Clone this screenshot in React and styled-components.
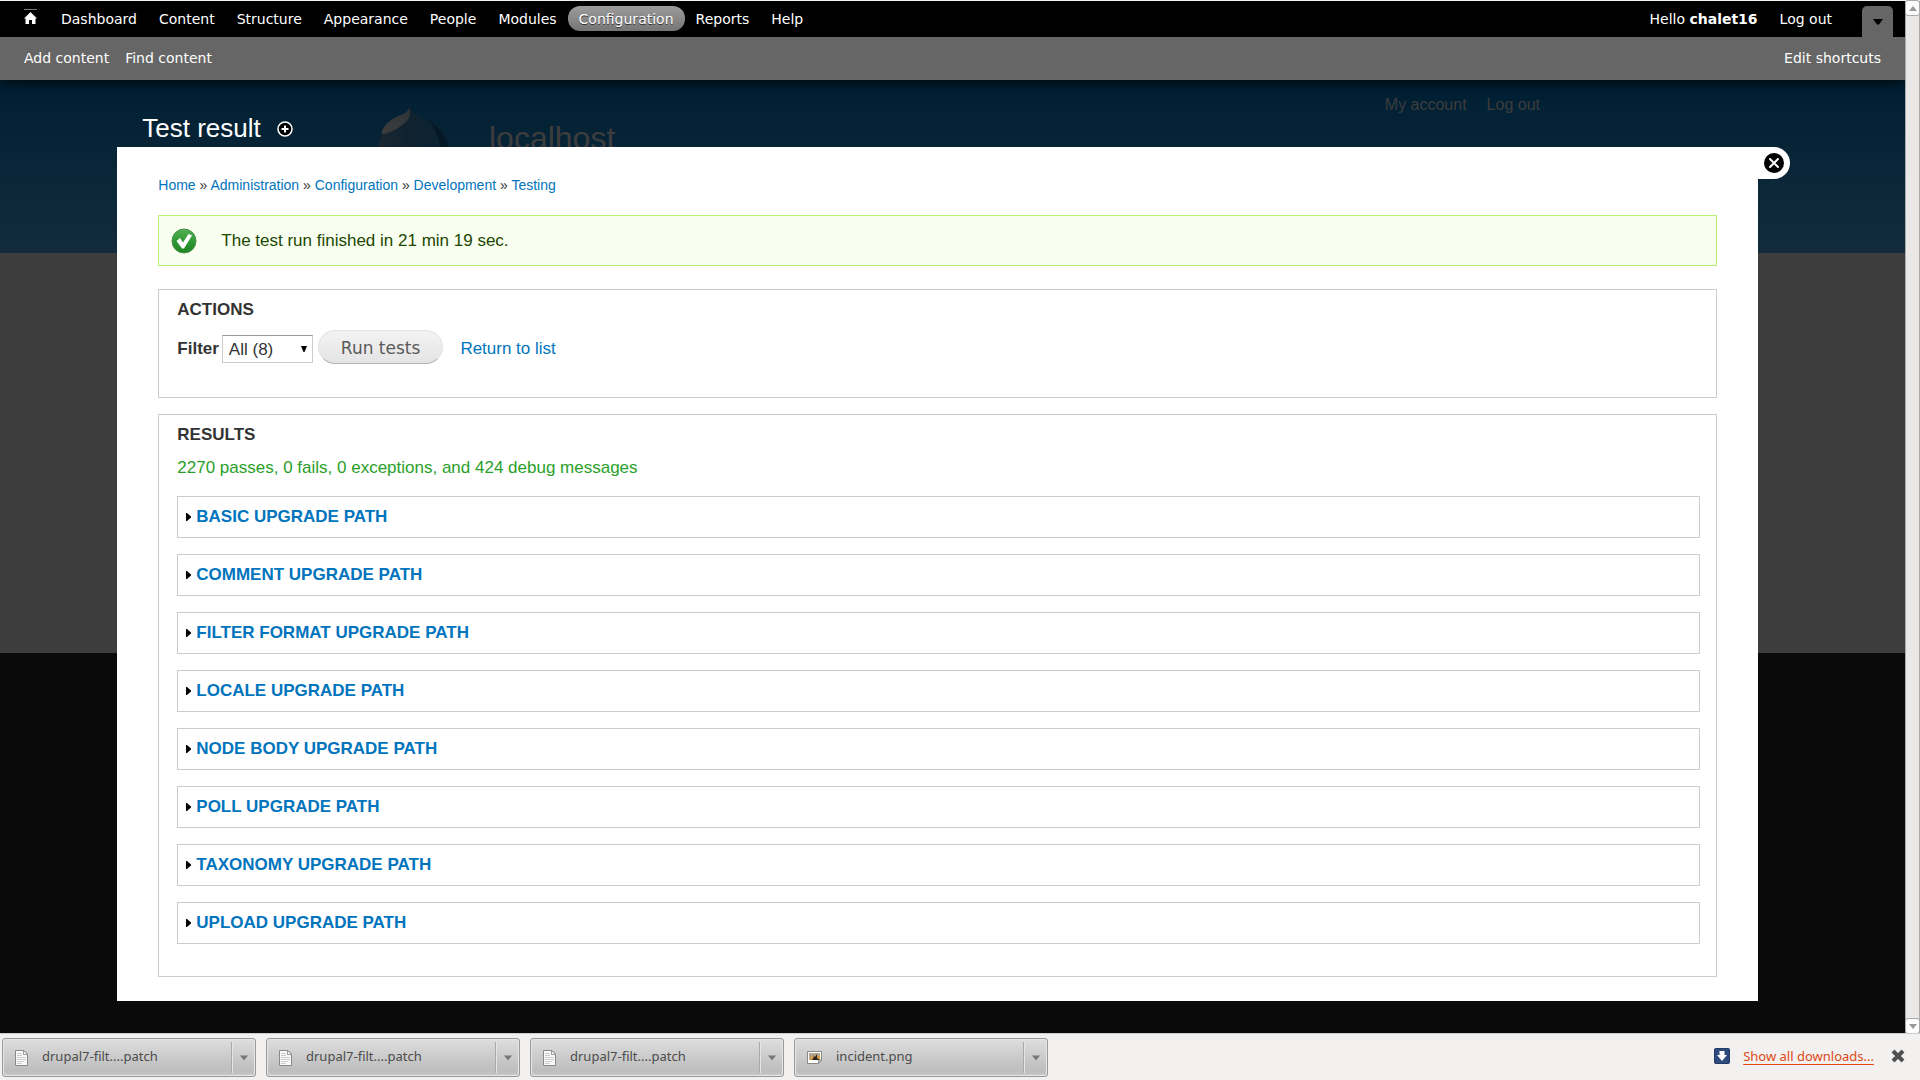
import React, { useState } from "react";
import styled, { createGlobalStyle } from "styled-components";

const mainMenu = [
  "Dashboard",
  "Content",
  "Structure",
  "Appearance",
  "People",
  "Modules",
  "Configuration",
  "Reports",
  "Help",
];

const crumbs = [
  "Home",
  "Administration",
  "Configuration",
  "Development",
  "Testing",
];

const testGroups = [
  "Basic upgrade path",
  "Comment upgrade path",
  "Filter format upgrade path",
  "Locale upgrade path",
  "Node body upgrade path",
  "Poll upgrade path",
  "Taxonomy upgrade path",
  "Upload upgrade path",
];

const downloads = [
  { name: "drupal7-filt....patch", type: "text" },
  { name: "drupal7-filt....patch", type: "text" },
  { name: "drupal7-filt....patch", type: "text" },
  { name: "incident.png", type: "image" },
];

function Toolbar() {
  return (
    <ToolbarWrap>
      <ToolbarMenu>
        <MenuList>
          <HomeLink href="#home" aria-label="Home">
            <svg width="14" height="16" viewBox="0 0 14 16">
              <path d="M0 .5h13" stroke="#777" />
              <path
                d="M6.5 3 0 9.500h1.500V15h3.500v-4h3v4h3.500V9.500H13z"
                fill="#fff"
              />
            </svg>
          </HomeLink>
          {mainMenu.map((item) => (
            <MenuLink
              key={item}
              href={`#${item}`}
              $active={item === "Configuration"}
            >
              {item}
            </MenuLink>
          ))}
        </MenuList>
        <UserMenu>
          <MenuLink href="#user">
            Hello <strong>chalet16</strong>
          </MenuLink>
          <MenuLink href="#logout">Log out</MenuLink>
          <DrawerToggle type="button" aria-label="Hide shortcuts">
            <svg width="10" height="6" viewBox="0 0 10 6">
              <path d="M0 0h10L6 5.500H4z" fill="#000" />
            </svg>
          </DrawerToggle>
        </UserMenu>
      </ToolbarMenu>
      <Shortcuts>
        <ShortcutList>
          <ShortcutLink href="#add">Add content</ShortcutLink>
          <ShortcutLink href="#find">Find content</ShortcutLink>
        </ShortcutList>
        <ShortcutLink href="#shortcuts">Edit shortcuts</ShortcutLink>
      </Shortcuts>
    </ToolbarWrap>
  );
}

function SiteHeader() {
  return (
    <Header>
      <HeaderInner>
        <SiteLogo width="74" height="84" viewBox="0 0 74 84">
          <defs>
            <linearGradient id="drop" x1="0" y1="0" x2="1" y2="0">
              <stop offset="0" stopColor="#1a2731" />
              <stop offset="0.4" stopColor="#11222f" />
              <stop offset="1" stopColor="#0a2436" />
            </linearGradient>
            <linearGradient id="shine" x1="1" y1="0" x2="0" y2="1">
              <stop offset="0" stopColor="#2f3337" />
              <stop offset="1" stopColor="#3d3d3d" />
            </linearGradient>
          </defs>
          <path
            d="M33 0c1 10 10 12 20 18 12 7 19 18 19 32 0 19-16 33-36 33S1 69 1 50C1 36 6 25 15 17c8-6 17-7 18-17z"
            fill="url(#drop)"
          />
          <path
            d="M53 18c12 7 19 18 19 32 0 12-5 20-13 26 7-14 8-40-6-58z"
            fill="#041826"
          />
          <path
            d="M32 4c3 8-1 13-7 17-6 5-12 7-17 9-4 1-4-2-2-5 3-6 8-9 13-12 6-3 11-3 13-9z"
            fill="url(#shine)"
          />
        </SiteLogo>
        <SiteName>localhost</SiteName>
        <SecondaryMenu>
          <span>My account</span>
          <span>Log out</span>
        </SecondaryMenu>
      </HeaderInner>
    </Header>
  );
}

function StatusMessage() {
  return (
    <Message role="status">
      <svg width="26" height="26" viewBox="0 0 26 26">
        <defs>
          <linearGradient id="ok" x1="0" y1="0" x2="0" y2="1">
            <stop offset="0" stopColor="#55b055" />
            <stop offset="0.5" stopColor="#2f9a33" />
            <stop offset="1" stopColor="#1c8420" />
          </linearGradient>
        </defs>
        <circle cx="13" cy="13" r="12" fill="url(#ok)" stroke="#4c8f4c" />
        <path
          d="M5.500 13 9 10l3 4.500L17.500 6l3.500 1.500L13 20.500h-2z"
          fill="#fff"
        />
      </svg>
      The test run finished in 21 min 19 sec.
    </Message>
  );
}

function Actions() {
  const [filter, setFilter] = useState("all");
  return (
    <Fieldset>
      <Legend>Actions</Legend>
      <ActionRow>
        <label htmlFor="filter">Filter</label>
        <SelectWrap>
          <Select
            id="filter"
            value={filter}
            onChange={(e) => setFilter(e.target.value)}
          >
            <option value="all">All (8)</option>
            <option value="pass">Pass (8)</option>
            <option value="fail">Fail (0)</option>
          </Select>
          <SelectArrow width="6" height="6" viewBox="0 0 6 6">
            <path d="M0 0h6L3.500 6h-1z" fill="#000" />
          </SelectArrow>
        </SelectWrap>
        <RunButton type="button">Run tests</RunButton>
        <ReturnLink href="#list">Return to list</ReturnLink>
      </ActionRow>
    </Fieldset>
  );
}

function Results() {
  return (
    <Fieldset>
      <Legend>Results</Legend>
      <Summary>
        2270 passes, 0 fails, 0 exceptions, and 424 debug messages
      </Summary>
      <GroupList>
        {testGroups.map((group) => (
          <Group key={group}>
            <svg width="6" height="10" viewBox="0 0 6 10">
              <path d="M0 1h1l4 3.500v1L1 9H0z" fill="#000" />
            </svg>
            <GroupLink href={`#${group}`}>{group}</GroupLink>
          </Group>
        ))}
      </GroupList>
    </Fieldset>
  );
}

function Overlay() {
  return (
    <OverlayWrap>
      <TitleBar>
        <Title>Test result</Title>
        <AddShortcut type="button" aria-label="Add to shortcuts">
          <svg width="16" height="16" viewBox="0 0 16 16">
            <circle
              cx="8"
              cy="8"
              r="7"
              fill="#000"
              stroke="#fff"
              strokeWidth="1.500"
            />
            <path d="M8 4.500v7M4.500 8h7" stroke="#fff" strokeWidth="2" />
          </svg>
        </AddShortcut>
      </TitleBar>
      <OverlayContent>
        <CloseButton type="button" aria-label="Close overlay">
          <svg width="20" height="20" viewBox="0 0 20 20">
            <circle cx="10" cy="10" r="10" fill="#000" />
            <path
              d="M6 6l8 8M14 6l-8 8"
              stroke="#fff"
              strokeWidth="2"
              strokeLinecap="round"
            />
          </svg>
        </CloseButton>
        <Breadcrumb aria-label="Breadcrumb">
          {crumbs.map((crumb, i) => (
            <React.Fragment key={crumb}>
              {i > 0 && " » "}
              <a href={`#${crumb}`}>{crumb}</a>
            </React.Fragment>
          ))}
        </Breadcrumb>
        <StatusMessage />
        <Fieldsets>
          <Actions />
          <Results />
        </Fieldsets>
      </OverlayContent>
    </OverlayWrap>
  );
}

function ScrollBar() {
  return (
    <ScrollTrack>
      <ScrollButton type="button" aria-label="Scroll up">
        <svg width="8" height="5" viewBox="0 0 8 5">
          <path d="M0 5h8L4 0z" fill="#999" />
        </svg>
      </ScrollButton>
      <ScrollButton type="button" aria-label="Scroll down">
        <svg width="8" height="5" viewBox="0 0 8 5">
          <path d="M0 0h8L4 5z" fill="#999" />
        </svg>
      </ScrollButton>
    </ScrollTrack>
  );
}

function FileIcon({ type }) {
  if (type === "image") {
    return (
      <svg width="16" height="16" viewBox="0 0 16 16">
        <path d="M.5 1.500h14v9l-3 3H.5z" fill="#fff" stroke="#8a8a84" />
        <path d="M2 3h11v7H2z" fill="#b3a58c" />
        <path d="M2 10l3-4 3 2 5-3v5z" fill="#d89a3a" />
        <path d="M5 10l2-3-1-2 2 2 2-3v4l3 2z" fill="#2b221a" />
        <path d="M14.500 10l-3 3.500V10z" fill="#ddd" stroke="#8a8a84" />
      </svg>
    );
  }
  return (
    <svg width="14" height="16" viewBox="0 0 14 16">
      <path
        d="M.5.5h8.500l3.500 3.500v11.500H.5z"
        fill="#fafafa"
        stroke="#888a85"
      />
      <path d="M8.500.5v4h4z" fill="#fff" stroke="#999" />
      <path
        d="M2 3.500h5M2 5.500h5M2 7.500h9M2 9.500h9M2 11.500h7M2 13.500h5"
        stroke="#ccc"
      />
    </svg>
  );
}

function DownloadShelf() {
  return (
    <Shelf>
      {downloads.map((file, i) => (
        <DownloadItem key={i}>
          <DownloadFile type="button">
            <FileIcon type={file.type} />
            <span>{file.name}</span>
          </DownloadFile>
          <DownloadMenu type="button" aria-label={`Options for ${file.name}`}>
            <svg width="8" height="6" viewBox="0 0 8 6">
              <path d="M0 .5h8L4 5.500z" fill="#777" />
            </svg>
          </DownloadMenu>
        </DownloadItem>
      ))}
      <ShelfRight>
        <svg width="16" height="16" viewBox="0 0 16 16">
          <rect
            x=".5"
            y=".5"
            width="15"
            height="15"
            rx="1"
            fill="#2f4a7d"
            stroke="#223a66"
          />
          <path d="M5.500 3h5v4H13l-5 6-5-6h2.500z" fill="#fff" />
        </svg>
        <ShowAll href="#downloads">Show all downloads...</ShowAll>
        <ShelfClose type="button" aria-label="Close downloads">
          <svg width="14" height="14" viewBox="0 0 14 14">
            <path
              d="M2 2l10 10M12 2L2 12"
              stroke="#505050"
              strokeWidth="4"
            />
          </svg>
        </ShelfClose>
      </ShelfRight>
    </Shelf>
  );
}

export default function App() {
  return (
    <>
      <GlobalStyle />
      <Browser>
        <Viewport>
          <Page>
            <Toolbar />
            <Backdrop>
              <SiteHeader />
              <SiteBody />
              <Overlay />
            </Backdrop>
          </Page>
          <ScrollBar />
        </Viewport>
        <DownloadShelf />
        <Pointer width="13" height="20" viewBox="0 0 13 20">
          <path
            d="M.5.5v16l3.700-3.500 2.300 5.500 3-1.200-2.300-5.300h5z"
            fill="#fff"
            stroke="#000"
          />
        </Pointer>
      </Browser>
    </>
  );
}

const GlobalStyle = createGlobalStyle`
  * {
    box-sizing: border-box;
  }
  body {
    margin: 0;
    background: #0a0a0a;
    font-family: "Liberation Sans", Arial, sans-serif;
    font-size: 17px;
    line-height: 24px;
    color: #333;
  }
  a {
    color: #0074bd;
    text-decoration: none;
  }
  button {
    padding: 0;
    border: 0;
    background: none;
    cursor: pointer;
  }
  svg {
    display: block;
    flex: none;
  }
`;

const Browser = styled.div`
  position: relative;
  display: flex;
  flex-direction: column;
  min-height: 100vh;
  border-top: 1px solid #f2f1f0;
`;

const Viewport = styled.div`
  flex: 1;
  display: flex;
`;

const Page = styled.div`
  flex: 1;
  min-width: 0;
  display: flex;
  flex-direction: column;
  overflow: hidden;
`;

/* toolbar */
const ToolbarWrap = styled.nav`
  position: relative;
  z-index: 2;
  font-family: "DejaVu Sans", Verdana, sans-serif;
  font-size: 14px;
  line-height: 20px;
  box-shadow: 0 2px 14px rgba(0, 0, 0, 0.8);
`;

const ToolbarMenu = styled.div`
  display: flex;
  justify-content: space-between;
  height: 36px;
  padding: 5px 12px 0 14px;
  background: #000;
`;

const MenuList = styled.div`
  display: flex;
  align-items: flex-start;
`;

const UserMenu = styled.div`
  display: flex;
  align-items: flex-start;
`;

const MenuLink = styled.a`
  height: 25px;
  padding: 3px 11px 0;
  border-radius: 12px;
  color: #fff;
  background: ${(props) =>
    props.$active ? "linear-gradient(#9b9b9b, #767676)" : "none"};
  text-shadow: ${(props) => (props.$active ? "0 1px 0 #333" : "none")};
`;

const HomeLink = styled.a`
  width: 36px;
  padding: 3px 10px 0;
`;

const DrawerToggle = styled.button`
  display: flex;
  justify-content: center;
  align-items: center;
  width: 31px;
  height: 31px;
  margin-left: 19px;
  border-radius: 5px 5px 0 0;
  background: #666;
`;

const Shortcuts = styled.div`
  display: flex;
  justify-content: space-between;
  height: 43px;
  padding: 11px 24px;
  background: #666;
`;

const ShortcutList = styled.div`
  display: flex;
  gap: 16px;
`;

const ShortcutLink = styled.a`
  color: #fff;
`;

/* dimmed site behind the overlay */
const Backdrop = styled.div`
  flex: 1;
  display: grid;
  grid-template-rows: 173px 400px 1fr;
`;

const Header = styled.header`
  grid-area: 1 / 1;
  background: linear-gradient(#001f33, #132c3c);
  color: #3d3d3d;
`;

const HeaderInner = styled.div`
  display: flex;
  align-items: flex-start;
  width: 1175px;
  margin: 0 auto;
  padding: 12px 0 0 12px;
`;

const SiteLogo = styled.svg`
  margin-top: 12px;
`;

const SiteName = styled.div`
  flex: 1;
  margin: 28px 0 0 38px;
  font-size: 32px;
  line-height: 36px;
`;

const SecondaryMenu = styled.div`
  display: flex;
  gap: 20px;
  font-size: 16px;
  line-height: 26px;
`;

const SiteBody = styled.div`
  grid-area: 2 / 1;
  background: #3d3d3d;
`;

/* overlay */
const OverlayWrap = styled.div`
  grid-area: 1 / 1 / 4 / 2;
  width: 88%;
  margin: 0 auto;
  padding: 29px 33px 32px 3px;
  z-index: 1;
`;

const TitleBar = styled.div`
  display: flex;
  align-items: center;
  gap: 16px;
  height: 38px;
  padding: 0 25px;
`;

const Title = styled.h1`
  margin: 0;
  font-size: 26px;
  font-weight: normal;
  line-height: 38px;
  color: #fff;
`;

const AddShortcut = styled.button`
  padding-top: 2px;
`;

const OverlayContent = styled.main`
  position: relative;
  padding: 28px 41px 24px;
  background: #fff;
`;

const CloseButton = styled.button`
  position: absolute;
  top: 0;
  left: 100%;
  display: flex;
  align-items: center;
  width: 32px;
  height: 32px;
  padding-left: 6px;
  border-radius: 0 16px 16px 0;
  background: #fff;
`;

const Breadcrumb = styled.nav`
  margin-bottom: 20px;
  font-size: 14px;
  line-height: 20px;
`;

const Message = styled.div`
  display: flex;
  align-items: center;
  gap: 24px;
  height: 51px;
  margin-bottom: 23px;
  padding: 0 12px;
  border: 1px solid #be7;
  background: #f8fff0;
  color: #234600;
`;

const Fieldsets = styled.div`
  display: grid;
  gap: 16px;
`;

const Fieldset = styled.section`
  padding: 8px 16px 32px 18px;
  border: 1px solid #ccc;
`;

const Legend = styled.h2`
  margin: 0;
  font-size: 17px;
  line-height: 24px;
  text-transform: uppercase;
`;

const ActionRow = styled.div`
  display: flex;
  align-items: flex-end;
  margin: 8px 0 1px;
  line-height: 30px;

  label {
    font-weight: bold;
  }
`;

const SelectWrap = styled.div`
  position: relative;
  margin: 0 5px 1px 3px;
`;

const Select = styled.select`
  appearance: none;
  display: block;
  width: 91px;
  height: 28px;
  padding: 0 6px;
  border: 1px solid #ccc;
  border-top-color: #999;
  border-radius: 0;
  background: #fff;
  color: #333;
  font: 17px "Liberation Sans", Arial, sans-serif;
`;

const SelectArrow = styled.svg`
  position: absolute;
  top: 11px;
  right: 6px;
  pointer-events: none;
`;

const RunButton = styled.button`
  height: 34px;
  padding: 2px 22px 0;
  border: 1px solid #e4e4e4;
  border-bottom-color: #b4b4b4;
  border-radius: 17px;
  background: linear-gradient(#f3f3f3, #e4e4e4);
  color: #5a5a5a;
  font: 17px "DejaVu Sans", Verdana, sans-serif;
`;

const ReturnLink = styled.a`
  margin-left: 17px;
`;

const Summary = styled.p`
  margin: 9px 0 16px;
  color: #2a9f2a;
`;

const GroupList = styled.div`
  display: grid;
  gap: 16px;
`;

const Group = styled.div`
  display: flex;
  align-items: center;
  gap: 4px;
  height: 42px;
  padding: 0 8px;
  border: 1px solid #ccc;
`;

const GroupLink = styled.a`
  font-weight: bold;
  text-transform: uppercase;
`;

/* browser parts */
const ScrollTrack = styled.div`
  display: flex;
  flex-direction: column;
  justify-content: space-between;
  width: 15px;
  border: solid #aaa;
  border-width: 0 1px;
  background: #e9e8e7;
`;

const ScrollButton = styled.button`
  display: flex;
  align-items: center;
  justify-content: center;
  height: 14px;
  background: #fdfdfd;
  border-radius: 2px;
  outline: 1px solid #aaa;
`;

const Shelf = styled.footer`
  display: flex;
  gap: 10px;
  height: 47px;
  padding: 4px 15px 3px 2px;
  border-top: 1px solid #ccc;
  background: #f2f1f0;
  font-family: "Noto Sans", "Open Sans", sans-serif;
  font-size: 13px;
  line-height: 20px;
`;

const DownloadItem = styled.div`
  display: flex;
  width: 254px;
  height: 39px;
  border: 1px solid #999;
  border-radius: 3px;
  background: linear-gradient(#dedede, #bdbdbd 85%, #c6c6c6);
  box-shadow: inset 0 0 1px 1px #e8e8e8;
`;

const DownloadFile = styled.button`
  flex: 1;
  display: flex;
  align-items: center;
  gap: 13px;
  padding-left: 12px;
  color: #4c4c4c;
  font: inherit;

  span {
    padding-bottom: 3px;
  }
`;

const DownloadMenu = styled.button`
  display: flex;
  align-items: center;
  justify-content: center;
  width: 24px;
  margin: 3px 0;
  border-left: 1px solid #aaa;
  box-shadow: inset 1px 0 0 #e4e4e4;
`;

const ShelfRight = styled.div`
  display: flex;
  align-items: center;
  gap: 13px;
  height: 36px;
  margin-left: auto;
`;

const ShowAll = styled.a`
  color: #dd4814;
  text-decoration: underline;
  text-underline-offset: 3px;
`;

const ShelfClose = styled.button`
  margin-left: 4px;
`;

const Pointer = styled.svg`
  position: absolute;
  left: 928px;
  top: 406px;
  pointer-events: none;
`;
